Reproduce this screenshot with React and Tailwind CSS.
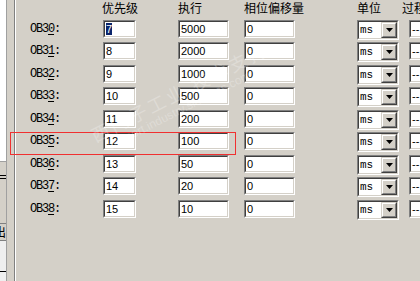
import React from "react";

const rows = [
  { n: "0", p: "7", e: "5000" },
  { n: "1", p: "8", e: "2000" },
  { n: "2", p: "9", e: "1000" },
  { n: "3", p: "10", e: "500" },
  { n: "4", p: "11", e: "200" },
  { n: "5", p: "12", e: "100" },
  { n: "6", p: "13", e: "50" },
  { n: "7", p: "14", e: "20" },
  { n: "8", p: "15", e: "10" },
];

const sans = { fontFamily: '"Liberation Sans", Arial, sans-serif' };
const mono = { fontFamily: '"Liberation Mono", "DejaVu Sans Mono", monospace' };
const cjk = { fontFamily: '"Noto Sans CJK SC", "Noto Sans", sans-serif' };

function Edit({ w, children }) {
  return (
    <div className={`${w} h-[18px] shrink-0 border border-t-[#808080] border-l-[#808080] border-r-white border-b-white`}>
      <div
        className="h-full border border-t-[#404040] border-l-[#404040] border-r-[#d4d0c8] border-b-[#d4d0c8] bg-white pl-[1px] text-[11px] leading-[14px] text-black overflow-hidden whitespace-nowrap"
        style={sans}
      >
        {children}
      </div>
    </div>
  );
}

function Combo() {
  return (
    <div className="w-[42px] h-[20px] shrink-0 border border-t-[#808080] border-l-[#808080] border-r-white border-b-white">
      <div className="h-full flex border border-t-[#404040] border-l-[#404040] border-r-[#d4d0c8] border-b-[#d4d0c8] bg-white">
        <div className="flex-1 pl-[1px] text-[11px] leading-[16px] text-black" style={mono}>
          ms
        </div>
        <div className="w-[16px] h-full border border-t-[#d4d0c8] border-l-[#d4d0c8] border-r-[#404040] border-b-[#404040]">
          <div className="h-full flex items-center justify-center bg-[#d4d0c8] border border-t-white border-l-white border-r-[#808080] border-b-[#808080]">
            <svg width="7" height="4" viewBox="0 0 7 4">
              <polygon points="0,0 7,0 3.5,4" fill="#000" />
            </svg>
          </div>
        </div>
      </div>
    </div>
  );
}

export default function App() {
  return (
    <div className="w-[420px] h-[281px] bg-[#d4d0c8] flex overflow-hidden relative">
      {/* left strip */}
      <div className="w-[6px] shrink-0 flex flex-col">
        <div className="h-[161px] bg-white" />
        <div className="h-px bg-[#a0a0a0]" />
        <div className="h-[13px]" />
        <div className="h-px bg-black" />
        <div className="h-[2px]" />
        <div className="h-px bg-black" />
        <div className="h-[44px]" />
        <div className="h-px bg-[#808080]" />
        <div className="h-[16px] flex justify-end items-center overflow-hidden text-[12px] leading-[16px] text-black" style={cjk}>
          <span className="shrink-0">出</span>
        </div>
        <div className="h-px bg-[#808080]" />
        <div className="flex-1 bg-[#efefef] flex flex-col">
          <div className="h-[30px]" />
          <div className="h-px bg-black" />
        </div>
      </div>
      <div className="w-px shrink-0 bg-[#a0a0a0]" />
      <div className="w-[7px] shrink-0" />
      <div className="w-px shrink-0 bg-[#808080]" />
      <div className="w-px shrink-0 bg-white" />

      {/* main */}
      <div className="flex-1 flex flex-col pl-[14px]">
        <div className="h-[20px] flex items-start text-[12px] leading-[14px] text-black pt-[1px] whitespace-nowrap" style={cjk}>
          <div className="w-[72px] shrink-0" />
          <div className="w-[34px] shrink-0">优先级</div>
          <div className="w-[42px] shrink-0" />
          <div className="w-[51px] shrink-0">执行</div>
          <div className="w-[15px] shrink-0" />
          <div className="w-[63px] shrink-0">相位偏移量</div>
          <div className="w-[50px] shrink-0" />
          <div className="w-[45px] shrink-0">单位</div>
          <div className="w-[40px] shrink-0">过程</div>
        </div>
        {rows.map((r, i) => (
          <div key={r.n} className={`${i % 2 === 0 ? "h-[22px]" : "h-[23px]"} flex items-start shrink-0`}>
            <div className="w-[73px] h-[18px] shrink-0 flex items-center text-[12px] text-black tracking-[-1.2px]" style={mono}>
              OB3<span className="underline underline-offset-2">{r.n}</span>:
            </div>
            <Edit w="w-[33px]">
              {i === 0 ? <span className="bg-[#0a246a] text-white">{r.p}</span> : r.p}
            </Edit>
            <div className="w-[42px] shrink-0" />
            <Edit w="w-[51px]">{r.e}</Edit>
            <div className="w-[15px] shrink-0" />
            <Edit w="w-[51px]">0</Edit>
            <div className="w-[62px] shrink-0" />
            <Combo />
            <div className="w-[10px] shrink-0" />
            <Edit w="w-[40px]">--</Edit>
          </div>
        ))}
      </div>

      {/* red annotation box */}
      <div className="absolute left-[10px] top-[132px] w-[226px] h-[23px] border border-[#f03030]" />

      {/* watermark */}
      <div className="absolute left-[95px] top-[125px] origin-left -rotate-[27deg] pointer-events-none whitespace-nowrap text-white/25" style={cjk}>
        <div className="text-[18px] leading-[20px] tracking-[3px]">西门子工业 技术支持</div>
        <div className="text-[12px] leading-[14px] pl-[10px]" style={sans}>support.industry.siemens.com</div>
      </div>
    </div>
  );
}
